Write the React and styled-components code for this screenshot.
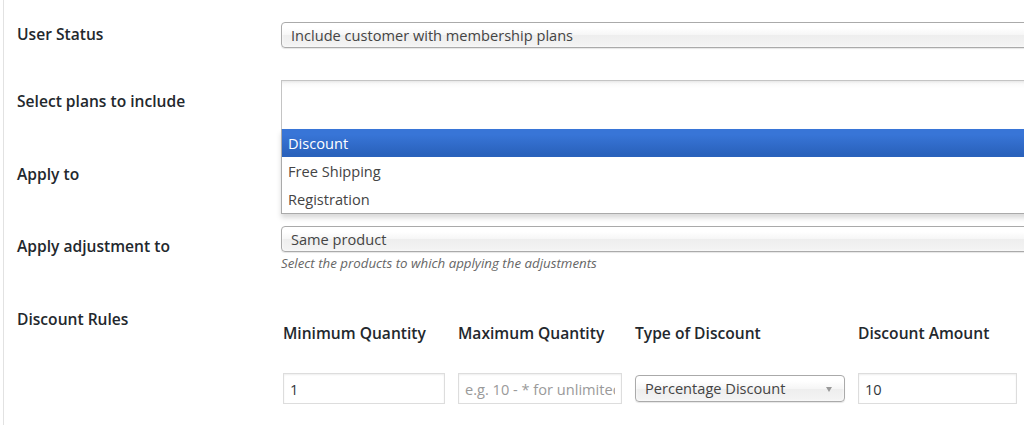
import React from "react";
import styled, { createGlobalStyle } from "styled-components";

const GlobalStyle = createGlobalStyle`
  html, body {
    margin: 0;
    padding: 0;
    background: #ffffff;
    overflow: hidden;
  }
  body {
    font-family: "Open Sans", "Liberation Sans", sans-serif;
    color: #444444;
  }
`;

const Page = styled.div`
  margin-left: 3px;
  border-left: 1px solid #e2e2e2;
  width: 1021px;
  height: 425px;
  overflow: hidden;
`;

const Row = styled.div`
  display: grid;
  grid-template-columns: 277px 1fr;
  height: ${(props) => props.$height}px;
`;

const Label = styled.div`
  padding: ${(props) => props.$top}px 0 0 13px;
  font-size: 15.6px;
  line-height: 20px;
  font-weight: 600;
  color: #23282d;
`;

const Field = styled.div`
  padding-top: ${(props) => props.$top}px;
  min-width: 0;
`;

const SelectBox = styled.div`
  position: relative;
  box-sizing: border-box;
  width: ${(props) => props.$width || "780px"};
  height: ${(props) => props.$height || 26}px;
  padding: 0 9px;
  border: 1px solid #aaaaaa;
  border-radius: 4px;
  background: linear-gradient(#ffffff 20%, #f6f6f6 50%, #eeeeee 52%, #f4f4f4 100%);
  box-shadow: inset 0 0 3px #ffffff, 0 1px 1px rgba(0, 0, 0, 0.1);
  font-size: 14.6px;
  line-height: ${(props) => (props.$height || 26) - 2}px;
  color: #444444;
  white-space: nowrap;
  overflow: hidden;
`;

const Arrow = styled.span`
  position: absolute;
  right: 12px;
  top: 50%;
  margin-top: -2px;
  width: 0;
  height: 0;
  border-left: 3.5px solid transparent;
  border-right: 3.5px solid transparent;
  border-top: 5px solid #999999;
`;

const Chosen = styled.div`
  position: relative;
  width: 780px;
`;

const Choices = styled.div`
  box-sizing: border-box;
  height: 49px;
  border: 1px solid #c4c4c4;
  border-bottom: 0;
  background: linear-gradient(#e8e8e8 0%, #fafafa 6%, #ffffff 15%);
`;

const Drop = styled.ul`
  position: absolute;
  top: 100%;
  left: 0;
  right: 0;
  z-index: 10;
  margin: 0;
  padding: 0;
  list-style: none;
  background: #ffffff;
  border: 1px solid #aaaaaa;
  border-top: 0;
  box-shadow: 0 4px 5px rgba(0, 0, 0, 0.15);
`;

const Option = styled.li`
  height: 28px;
  padding-left: 6px;
  font-size: 14.6px;
  line-height: 28px;
  color: ${(props) => (props.$active ? "#ffffff" : "#444444")};
  background: ${(props) =>
    props.$active ? "linear-gradient(#3875d7 20%, #2a62bc 90%)" : "transparent"};
`;

const Description = styled.p`
  margin: 2px 0 0;
  font-size: 13.3px;
  line-height: 18px;
  font-style: italic;
  color: #666666;
`;

const RulesGrid = styled.div`
  display: grid;
  grid-template-columns: 162px 164px 210px 159px;
  column-gap: 13px;
  row-gap: 30px;
  align-items: center;
  padding-left: 2px;
`;

const ColHead = styled.div`
  font-size: 15.6px;
  line-height: 20px;
  font-weight: 600;
  color: #23282d;
  white-space: nowrap;
`;

const Input = styled.input`
  box-sizing: border-box;
  width: 100%;
  height: 31px;
  margin: 0;
  padding: 0 6px;
  border: 1px solid #dddddd;
  border-radius: 0;
  box-shadow: inset 0 1px 2px rgba(0, 0, 0, 0.07);
  background: #ffffff;
  font-family: "Open Sans", "Liberation Sans", sans-serif;
  font-size: 14.6px;
  color: #32373c;
  outline: none;
  &::placeholder {
    color: #9a9a9a;
  }
`;

function App() {
  return (
    <>
      <GlobalStyle />
      <Page>
        <Row $height={70}>
          <Label $top={24}>User Status</Label>
          <Field $top={22}>
            <SelectBox>Include customer with membership plans</SelectBox>
          </Field>
        </Row>

        <Row $height={73}>
          <Label $top={21}>Select plans to include</Label>
          <Field $top={10}>
            <Chosen>
              <Choices />
              <Drop>
                <Option $active>Discount</Option>
                <Option>Free Shipping</Option>
                <Option>Registration</Option>
              </Drop>
            </Chosen>
          </Field>
        </Row>

        <Row $height={73}>
          <Label $top={21}>Apply to</Label>
          <Field $top={10}>
            {/* covered by the open plans dropdown */}
            <SelectBox />
          </Field>
        </Row>

        <Row $height={73}>
          <Label $top={20}>Apply adjustment to</Label>
          <Field $top={10}>
            <SelectBox>Same product</SelectBox>
            <Description>Select the products to which applying the adjustments</Description>
          </Field>
        </Row>

        <Row $height={136}>
          <Label $top={20}>Discount Rules</Label>
          <Field $top={34}>
            <RulesGrid>
              <ColHead>Minimum Quantity</ColHead>
              <ColHead>Maximum Quantity</ColHead>
              <ColHead>Type of Discount</ColHead>
              <ColHead>Discount Amount</ColHead>
              <Input type="text" defaultValue="1" />
              <Input type="text" placeholder="e.g. 10 - * for unlimited items" />
              <SelectBox $width="210px" $height={27}>
                Percentage Discount
                <Arrow />
              </SelectBox>
              <Input type="text" defaultValue="10" />
            </RulesGrid>
          </Field>
        </Row>
      </Page>
    </>
  );
}

export default App;
